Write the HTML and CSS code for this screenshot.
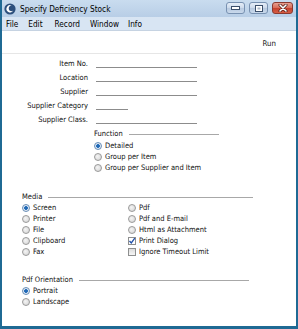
FILE: index.html
```html
<!DOCTYPE html>
<html>
<head>
<meta charset="utf-8">
<link rel="stylesheet" href="styles.css">
</head>
<body>
<div class="window">
  <div class="titlebar">
    <svg class="appicon" width="12" height="12" viewBox="0 0 12 12">
      <circle cx="6" cy="6" r="5.6" fill="#2c4f7c"/>
      <path d="M7.8 2.6 A3.6 3.6 0 1 0 9.2 7.6 A2.8 2.8 0 1 1 7.8 2.6 Z" fill="#ffffff"/>
    </svg>
    <span class="title">Specify Deficiency Stock</span>
    <div class="winbtns">
      <div class="wbtn">
        <svg width="9" height="4" viewBox="0 0 9 4"><rect x="0.5" y="0.5" width="8" height="3" fill="#fff" stroke="#3b4f6b"/></svg>
      </div>
      <div class="wbtn">
        <svg width="8" height="7" viewBox="0 0 8 7"><rect x="0.5" y="0.5" width="7" height="6" fill="#fff" stroke="#3b4f6b"/><rect x="2.5" y="2.5" width="3" height="2" fill="#aab8c8"/></svg>
      </div>
      <div class="wbtn close">
        <svg width="10" height="8" viewBox="0 0 10 8"><path d="M2 1 L8 7 M8 1 L2 7" stroke="#4a1a14" stroke-width="3" stroke-linecap="round"/><path d="M2 1 L8 7 M8 1 L2 7" stroke="#fff" stroke-width="1.6" stroke-linecap="round"/></svg>
      </div>
    </div>
  </div>
  <div class="menubar">
    <span class="mi m-file">File</span>
    <span class="mi m-edit">Edit</span>
    <span class="mi m-record">Record</span>
    <span class="mi m-window">Window</span>
    <span class="mi m-info">Info</span>
  </div>
  <div class="client">
    <div class="toolbar"><span class="run">Run</span></div>
    <div class="form">
      <div class="fields">
        <div class="frow"><span class="lbl">Item No.</span><span class="fld wide"></span></div>
        <div class="frow"><span class="lbl">Location</span><span class="fld wide"></span></div>
        <div class="frow"><span class="lbl">Supplier</span><span class="fld wide"></span></div>
        <div class="frow"><span class="lbl">Supplier Category</span><span class="fld short"></span></div>
        <div class="frow"><span class="lbl">Supplier Class.</span><span class="fld wide"></span></div>
      </div>

      <div class="group func">
        <div class="ghead"><span>Function</span><span class="gline"></span></div>
        <div class="opt"><span class="radio on"></span>Detailed</div>
        <div class="opt"><span class="radio"></span>Group per Item</div>
        <div class="opt"><span class="radio"></span>Group per Supplier and Item</div>
      </div>

      <div class="group media">
        <div class="ghead"><span>Media</span><span class="gline"></span></div>
        <div class="cols">
          <div class="col">
            <div class="opt"><span class="radio on"></span>Screen</div>
            <div class="opt"><span class="radio"></span>Printer</div>
            <div class="opt"><span class="radio"></span>File</div>
            <div class="opt"><span class="radio"></span>Clipboard</div>
            <div class="opt"><span class="radio"></span>Fax</div>
          </div>
          <div class="col right">
            <div class="opt"><span class="radio"></span>Pdf</div>
            <div class="opt"><span class="radio"></span>Pdf and E-mail</div>
            <div class="opt"><span class="radio"></span>Html as Attachment</div>
            <div class="opt"><span class="check on"><svg width="8" height="8" viewBox="0 0 8 8"><path d="M1.5 4 L3.3 6 L6.8 1.2" fill="none" stroke="#1f4fa8" stroke-width="1.3"/></svg></span>Print Dialog</div>
            <div class="opt"><span class="check"></span>Ignore Timeout Limit</div>
          </div>
        </div>
      </div>

      <div class="group pdfo">
        <div class="ghead"><span>Pdf Orientation</span><span class="gline"></span></div>
        <div class="opt"><span class="radio on"></span>Portrait</div>
        <div class="opt"><span class="radio"></span>Landscape</div>
      </div>
    </div>
  </div>
</div>
</body>
</html>
```

FILE: styles.css
```css
* { box-sizing: border-box; }
html, body { margin: 0; padding: 0; }
body {
  width: 298px;
  height: 329px;
  overflow: hidden;
  font-family: "DejaVu Sans Condensed", "DejaVu Sans", sans-serif;
  color: #111;
  background: #fff;
}
.window {
  width: 298px;
  height: 329px;
  display: flex;
  flex-direction: column;
  background: linear-gradient(#c6daee, #b9cfe6);
  border-left: 2px solid #1f6a94;
  border-right: 2px solid #1f6a94;
  border-bottom: 3px solid #1f6a94;
}
.titlebar {
  height: 17px;
  display: flex;
  align-items: center;
  padding-left: 2px;
  background: linear-gradient(#c9dcef, #b8cee6);
}
.appicon { flex: none; }
.title {
  margin-left: 4px;
  font-size: 8.2px;
  color: #000;
}
.winbtns {
  margin-left: auto;
  display: flex;
  gap: 4px;
  padding-right: 3px;
  align-self: flex-start;
  margin-top: 2px;
}
.wbtn {
  width: 19px;
  height: 12px;
  border: 1px solid #7891b1;
  border-radius: 3px;
  background: linear-gradient(#e6eef8 0%, #cbd9ea 50%, #b7c9df 51%, #c9d9ec 100%);
  display: flex;
  align-items: center;
  justify-content: center;
}
.wbtn.close {
  width: 21px;
  border-color: #8a3a30;
  background: linear-gradient(#e9a090 0%, #d66a56 50%, #c4402c 51%, #d55c44 100%);
}
.menubar {
  height: 14px;
  display: flex;
  align-items: center;
  background: #d8e5f3;
  border-bottom: 1px solid #c6d3e2;
  font-size: 8.2px;
  color: #000;
}
.mi { display: block; }
.m-file { margin-left: 4px; }
.m-edit { margin-left: 10px; }
.m-record { margin-left: 12px; }
.m-window { margin-left: 10px; }
.m-info { margin-left: 9px; }
.client {
  flex: 1;
  background: #fff;
  display: flex;
  flex-direction: column;
}
.toolbar {
  height: 23px;
  display: flex;
  align-items: center;
  justify-content: flex-end;
  padding-right: 20px;
  padding-top: 2px;
  border-bottom: 1px solid #e6e6e6;
  font-size: 7.8px;
}
.form {
  font-size: 7.5px;
  padding-top: 2px;
}
.fields { display: flex; flex-direction: column; }
.frow {
  height: 14px;
  display: flex;
  align-items: center;
}
.lbl {
  width: 86px;
  text-align: right;
  flex: none;
}
.fld {
  margin-left: 8px;
  height: 1px;
  background: #8c8c8c;
  align-self: flex-start;
  margin-top: 11px;
}
.fld.wide { width: 101px; }
.fld.short { width: 32px; }

.ghead {
  display: flex;
  align-items: center;
  height: 14px;
}
.gline {
  height: 1px;
  background: #a8a8a8;
  margin-left: 6px;
  margin-top: 3px;
}
.opt {
  height: 11px;
  display: flex;
  align-items: center;
  white-space: nowrap;
}
.radio {
  width: 8px;
  height: 8px;
  border-radius: 50%;
  border: 1px solid #9a9a9a;
  background: radial-gradient(circle at 40% 40%, #f4f4f4, #d2d2d2);
  margin-right: 3px;
  flex: none;
  position: relative;
}
.radio.on {
  border-color: #6a8fb8;
  background: radial-gradient(circle, #1b5fa6 0, #2a73c0 1.6px, #e8eef6 2.2px, #c9d6e4 100%);
}
.check {
  width: 8px;
  height: 8px;
  border: 1px solid #8e8f8f;
  background: linear-gradient(#dcdcdc, #f6f6f6);
  margin-right: 3px;
  flex: none;
  display: flex;
  align-items: center;
  justify-content: center;
}
.check.on { background: #fff; }
.check svg { flex: none; }

.func { margin-left: 92px; }
.func .gline { width: 90px; }

.media { margin-left: 20px; margin-top: 17px; }
.media .ghead { height: 12px; }
.media .gline { width: 205px; }
.cols { display: flex; }
.col { width: 106px; }

.pdfo { margin-left: 20px; margin-top: 16px; }
.pdfo .ghead { height: 12px; }
.pdfo .gline { width: 170px; }
```
